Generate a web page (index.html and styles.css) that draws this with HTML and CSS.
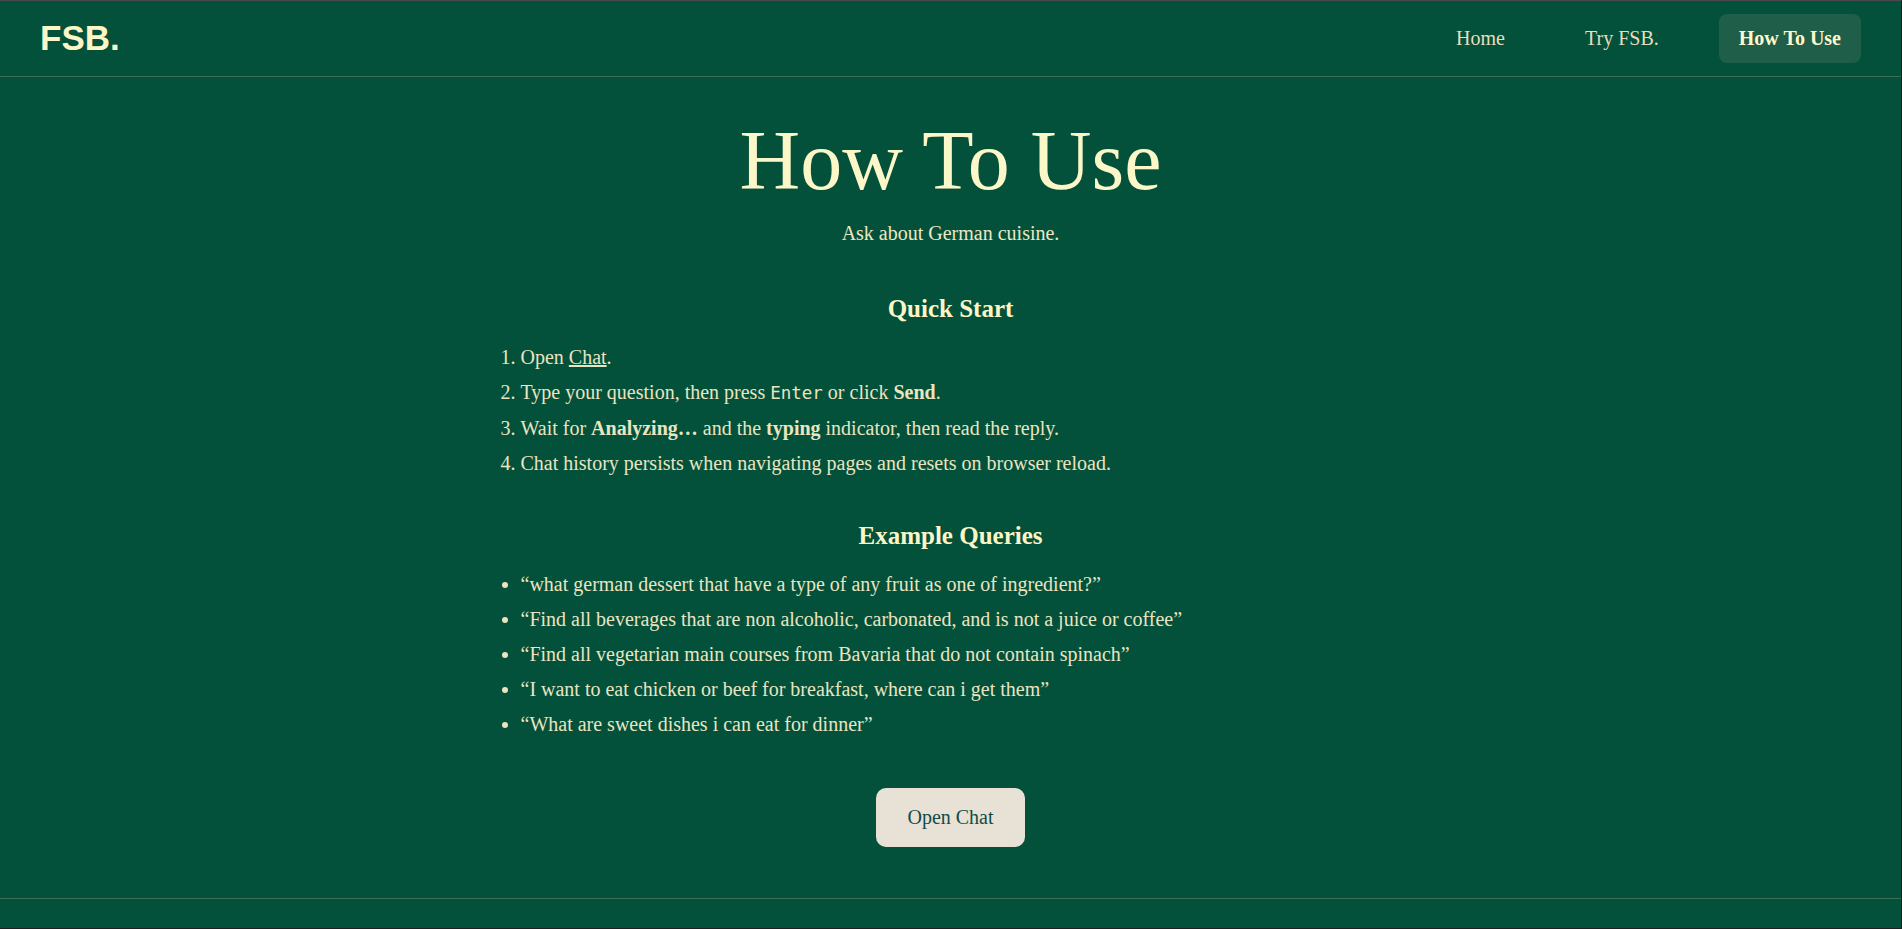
FILE: index.html
```html
<!DOCTYPE html>
<html lang="en">
<head>
<meta charset="utf-8">
<title>How To Use - FSB.</title>
<link rel="stylesheet" href="styles.css">
</head>
<body>
<div class="page">
  <header class="topbar">
    <a class="logo" href="#">FSB.</a>
    <nav class="nav">
      <a class="nav-link" href="#">Home</a>
      <a class="nav-link" href="#">Try FSB.</a>
      <a class="nav-link active" href="#">How To Use</a>
    </nav>
  </header>
  <main class="content">
    <h1 class="title">How To Use</h1>
    <p class="subtitle">Ask about German cuisine.</p>

    <section class="section">
      <h2 class="section-title">Quick Start</h2>
      <ol class="steps">
        <li>Open <a class="inline-link" href="#">Chat</a>.</li>
        <li>Type your question, then press <code class="kbd">Enter</code> or click <strong>Send</strong>.</li>
        <li>Wait for <strong>Analyzing…</strong> and the <strong>typing</strong> indicator, then read the reply.</li>
        <li>Chat history persists when navigating pages and resets on browser reload.</li>
      </ol>
    </section>

    <section class="section">
      <h2 class="section-title">Example Queries</h2>
      <ul class="examples">
        <li>“what german dessert that have a type of any fruit as one of ingredient?”</li>
        <li>“Find all beverages that are non alcoholic, carbonated, and is not a juice or coffee”</li>
        <li>“Find all vegetarian main courses from Bavaria that do not contain spinach”</li>
        <li>“I want to eat chicken or beef for breakfast, where can i get them”</li>
        <li>“What are sweet dishes i can eat for dinner”</li>
      </ul>
    </section>

    <div class="actions">
      <a class="btn" href="#">Open Chat</a>
    </div>
  </main>
  <footer class="footer"></footer>
</div>
</body>
</html>
```

FILE: styles.css
```css
* {
  box-sizing: border-box;
}

html {
  background: #1f1f22;
}

body {
  margin: 0;
  font-family: "Liberation Serif", "Times New Roman", serif;
  font-size: 20px;
  color: #e9e5c1;
}

.page {
  min-height: 929px;
  height: 929px;
  display: flex;
  flex-direction: column;
  background: #03503b;
  border-top: 1px solid #4a4a4a;
  border-right: 1px solid #1f1f22;
  border-bottom: 1px solid #1f1f22;
}

.topbar {
  height: 76px;
  flex: none;
  display: flex;
  align-items: center;
  justify-content: space-between;
  padding: 0 40px 0 40px;
  border-bottom: 1px solid #3b6d57;
}

.logo {
  font-family: "Liberation Sans", Arial, sans-serif;
  font-weight: 700;
  font-size: 35px;
  color: #fcf6c6;
  text-decoration: none;
  line-height: 1;
  margin-top: -2px;
}

.nav {
  display: flex;
  align-items: center;
  gap: 40px;
}

.nav-link {
  font-size: 20px;
  line-height: 23px;
  padding: 13px 20px;
  border-radius: 8px;
  color: #e3dfbb;
  text-decoration: none;
}

.nav-link.active {
  background: #1f5e48;
  color: #fff8cc;
  font-weight: 700;
}

.content {
  flex: 1;
  width: 900px;
  margin: 0 auto;
  padding: 34px 0 51px;
}

.title {
  margin: 0 0 8px;
  text-align: center;
  font-weight: 400;
  font-size: 84px;
  line-height: 100px;
  color: #fcf7c8;
}

.subtitle {
  margin: 0 0 47px;
  text-align: center;
  font-size: 20px;
  line-height: 28px;
  color: #ece8c4;
}

.section {
  margin-bottom: 44px;
}

.section-title {
  margin: 0 0 19px;
  text-align: center;
  font-size: 25px;
  line-height: 30px;
  font-weight: 700;
  color: #fcf6c6;
}

.steps,
.examples {
  margin: 0;
  padding-left: 20px;
}

.steps li,
.examples li {
  line-height: 28px;
  margin-bottom: 7px;
}

.inline-link {
  color: inherit;
  text-decoration: underline;
}

.kbd {
  font-family: "DejaVu Sans Mono", "Liberation Mono", monospace;
  font-size: 17.5px;
}

strong {
  font-weight: 700;
}

.actions {
  display: flex;
  justify-content: center;
  margin-top: 50px;
}

.btn {
  display: inline-block;
  padding: 17px 31px;
  line-height: 25px;
  font-size: 20px;
  background: #e8e2d6;
  color: #124b47;
  border-radius: 10px;
  text-decoration: none;
}

.footer {
  flex: 1;
  border-top: 1px solid #3b6d57;
}
```
